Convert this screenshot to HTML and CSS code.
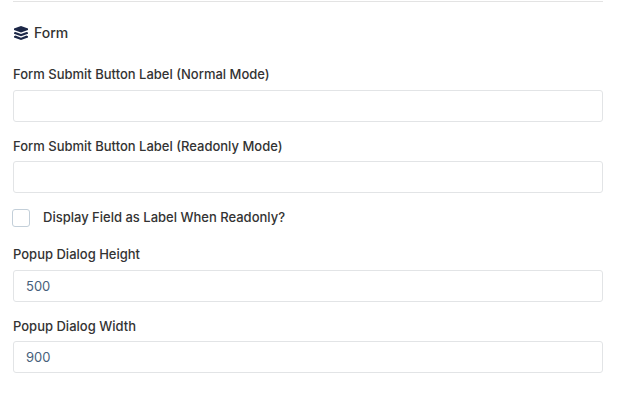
FILE: index.html
```
<!DOCTYPE html>
<html lang="en">
<head>
    <meta charset="UTF-8">
    <meta name="viewport" content="width=device-width, initial-scale=1.0">
    <title>Form</title>
    <link rel="stylesheet" href="styles.css">
</head>
<body>
    <form class="settings">
        <h4 class="section-title">
            <svg class="icon" viewBox="0 0 14 14" aria-hidden="true">
                <path d="M7 0L14 2.600v1.400L7 6.600 0 4v-1.400z"/>
                <path d="M0 6.500l1.500-.6L7 8l5.500-2.100 1.500.6v1.200L7 10.300 0 7.700z"/>
                <path d="M0 10.200l1.500-.6L7 11.700l5.500-2.100 1.500.6v1.200L7 14 0 11.400z"/>
            </svg>
            Form
        </h4>
        <div class="form-group">
            <label for="submitLabel">Form Submit Button Label (Normal Mode)</label>
            <input type="text" id="submitLabel">
        </div>
        <div class="form-group">
            <label for="readonlyLabel">Form Submit Button Label (Readonly Mode)</label>
            <input type="text" id="readonlyLabel">
        </div>
        <div class="form-check">
            <input type="checkbox" id="displayLabel">
            <label for="displayLabel">Display Field as Label When Readonly?</label>
        </div>
        <div class="form-group">
            <label for="dialogHeight">Popup Dialog Height</label>
            <input type="text" id="dialogHeight" value="500">
        </div>
        <div class="form-group">
            <label for="dialogWidth">Popup Dialog Width</label>
            <input type="text" id="dialogWidth" value="900">
        </div>
    </form>
</body>
</html>
```
FILE: styles.css
```
* {
    box-sizing: border-box;
}
body {
    margin: 0;
    background-color: #fff;
    font-family: Inter, sans-serif;
    font-size: 13px;
    font-weight: 500;
    color: #333;
}
.settings {
    width: 590px;
    margin: 1px 0 0 13px;
    border-top: 1px solid #e3e3e3;
}
.section-title {
    display: flex;
    align-items: center;
    gap: 6px;
    height: 20px;
    margin: 20px 0 22px;
    padding-left: 1px;
    font-size: 14px;
    font-weight: 500;
}
.icon {
    width: 14px;
    height: 14px;
    margin-top: 2px;
    fill: #1c2747;
}
.form-group {
    margin-bottom: 14.2px;
}
label {
    display: block;
    line-height: 20px;
}
.form-group label {
    margin-bottom: 5.5px;
}
input[type="text"] {
    display: block;
    width: 100%;
    height: 32px;
    padding: 0 12px;
    border: 1px solid #e2e4e6;
    border-radius: 3px;
    font: 400 13px Inter, sans-serif;
    color: #475f7b;
}
.form-check {
    display: flex;
    align-items: center;
    gap: 13px;
    height: 20px;
    margin: 14.8px 0 16.1px -1px;
}
.form-check label {
    margin-bottom: 2px;
}
input[type="checkbox"] {
    appearance: none;
    width: 18px;
    height: 18px;
    margin: 0;
    border: 1px solid #c3cfd9;
    border-radius: 3px;
}
```
